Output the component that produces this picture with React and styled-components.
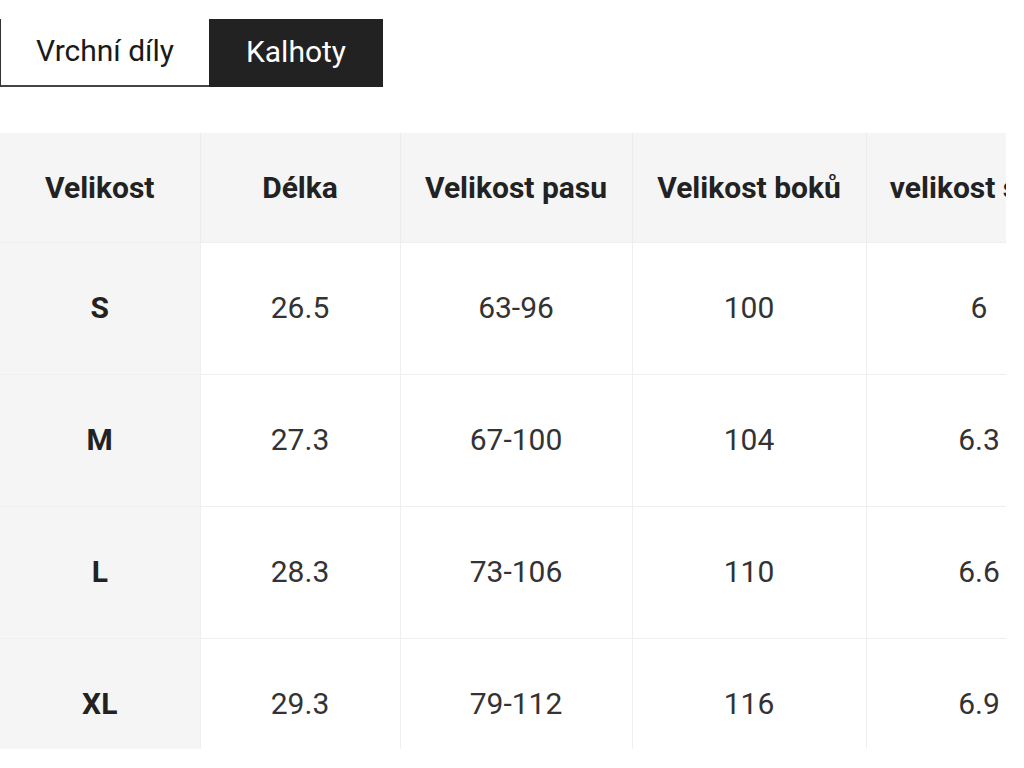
import styled, { createGlobalStyle } from "styled-components";

const GlobalStyle = createGlobalStyle`
  html, body {
    margin: 0;
    padding: 0;
    background: #ffffff;
    font-family: Roboto, "Noto Sans", sans-serif;
    overflow: hidden;
  }
`;

const Page = styled.div`
  width: 1024px;
  height: 768px;
  padding-top: 19px;
  box-sizing: border-box;
`;

const Tabs = styled.div`
  display: flex;
  height: 68px;
`;

const Tab = styled.button`
  box-sizing: border-box;
  height: 68px;
  width: ${(p) => p.$width}px;
  margin: 0;
  padding: 0 0 3px;
  font-family: Roboto, "Noto Sans", sans-serif;
  font-size: 30px;
  font-weight: 400;
  border: none;
  border-radius: 0;
  cursor: pointer;
  background: ${(p) => (p.$active ? "#222222" : "#ffffff")};
  color: ${(p) => (p.$active ? "#ffffff" : "#1a1a1a")};
  border-left: ${(p) => (p.$active ? "none" : "1.5px solid #333")};
  border-bottom: ${(p) => (p.$active ? "none" : "2px solid #444")};
`;

const TableWrap = styled.div`
  margin-top: 46px;
  width: 1006px;
  height: 616px;
  overflow: hidden;
`;

const Table = styled.table`
  border-collapse: collapse;
  table-layout: fixed;
  width: 1092px;
`;

const Head = styled.th`
  height: 109px;
  padding: 0;
  background: #f5f5f5;
  border-right: 1px solid #ececec;
  font-size: 30px;
  font-weight: 700;
  color: #222;
  text-align: center;
  white-space: nowrap;
  overflow: hidden;
`;

const Cell = styled.td`
  height: 128px;
  padding: 0 0 3px;
  background: ${(p) => (p.$first ? "#f5f5f5" : "#ffffff")};
  border-right: 1px solid #efefef;
  border-top: 1px solid #efefef;
  font-size: 30px;
  font-weight: ${(p) => (p.$first ? 700 : 400)};
  color: ${(p) => (p.$first ? "#222" : "#333")};
  text-align: center;
  white-space: nowrap;
`;

const columns = [
  { label: "Velikost", width: 200 },
  { label: "Délka", width: 200 },
  { label: "Velikost pasu", width: 232 },
  { label: "Velikost boků", width: 234 },
  { label: "velikost sedu", width: 226 },
];

const rows = [
  ["S", "26.5", "63-96", "100", "6"],
  ["M", "27.3", "67-100", "104", "6.3"],
  ["L", "28.3", "73-106", "110", "6.6"],
  ["XL", "29.3", "79-112", "116", "6.9"],
];

export default function App() {
  return (
    <>
      <GlobalStyle />
      <Page>
        <Tabs>
          <Tab $width={209}>Vrchní díly</Tab>
          <Tab $width={174} $active>
            Kalhoty
          </Tab>
        </Tabs>
        <TableWrap>
          <Table>
            <colgroup>
              {columns.map((c) => (
                <col key={c.label} style={{ width: c.width }} />
              ))}
            </colgroup>
            <thead>
              <tr>
                {columns.map((c) => (
                  <Head key={c.label}>{c.label}</Head>
                ))}
              </tr>
            </thead>
            <tbody>
              {rows.map((r) => (
                <tr key={r[0]}>
                  {r.map((v, i) => (
                    <Cell key={i} $first={i === 0}>
                      {v}
                    </Cell>
                  ))}
                </tr>
              ))}
            </tbody>
          </Table>
        </TableWrap>
      </Page>
    </>
  );
}
